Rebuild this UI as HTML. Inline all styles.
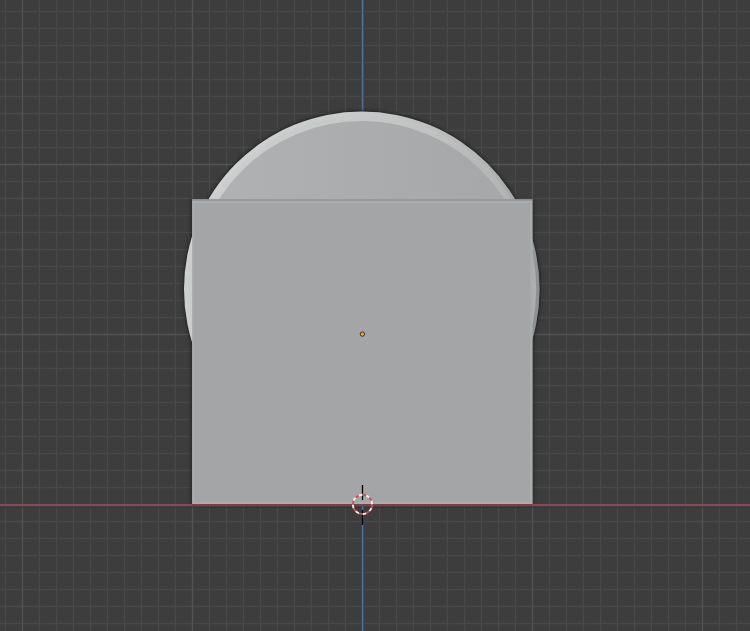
<!DOCTYPE html>
<html><head><meta charset="utf-8"><style>
html,body{margin:0;padding:0;background:#3d3d3d;overflow:hidden;width:750px;height:631px;font-family:"Liberation Sans",sans-serif}
svg{display:block;position:absolute;left:0;top:0}
.f{position:absolute;left:0;top:0;width:750px;height:631px}
#rimA{background:conic-gradient(from 0deg at 361.8px 289.3px,#c8caca 0deg,#bcbebe 25deg,#b1b3b4 45deg,#a2a4a5 65deg,#909293 85deg,#8c8e8f 110deg,#8c8e8f 160deg,#c8caca 220deg,#cdcfcf 270deg,#d0d2d2 315deg,#c8caca 360deg);clip-path:circle(177.8px at 361.8px 289.3px)}
#rimB{background:conic-gradient(from 0deg at 361.8px 289.3px,#c6c8c8 0deg,#c0c2c2 25deg,#b6b8b8 45deg,#b0b2b2 65deg,#adafb0 85deg,#acaeaf 110deg,#acaeaf 160deg,#c8caca 220deg,#cbcdcd 270deg,#cccece 315deg,#c6c8c8 360deg);clip-path:circle(174.4px at 361.8px 289.3px)}
#inner{background:linear-gradient(90deg,#b0b2b3 192.2px,#a4a6a7 531.4px);clip-path:circle(169.6px at 361.8px 290.6px)}
</style></head><body>
<svg width="750" height="631" viewBox="0 0 750 631">
<defs><filter id="bl" x="-20%" y="-20%" width="140%" height="140%"><feGaussianBlur stdDeviation="1.8"/></filter></defs>
<rect width="750" height="631" fill="#3d3d3d"/>
<path d="M5.5 0V631 M39.5 0V631 M56.5 0V631 M73.5 0V631 M90.5 0V631 M107.5 0V631 M124.5 0V631 M141.5 0V631 M158.5 0V631 M175.5 0V631 M209.5 0V631 M226.5 0V631 M243.5 0V631 M260.5 0V631 M277.5 0V631 M294.5 0V631 M311.5 0V631 M328.5 0V631 M345.5 0V631 M379.5 0V631 M396.5 0V631 M413.5 0V631 M430.5 0V631 M447.5 0V631 M464.5 0V631 M481.5 0V631 M498.5 0V631 M515.5 0V631 M549.5 0V631 M566.5 0V631 M583.5 0V631 M600.5 0V631 M617.5 0V631 M634.5 0V631 M651.5 0V631 M668.5 0V631 M685.5 0V631 M719.5 0V631 M736.5 0V631 M0 11.5H750 M0 28.5H750 M0 45.5H750 M0 62.5H750 M0 79.5H750 M0 96.5H750 M0 113.5H750 M0 130.5H750 M0 147.5H750 M0 181.5H750 M0 198.5H750 M0 215.5H750 M0 232.5H750 M0 249.5H750 M0 266.5H750 M0 283.5H750 M0 300.5H750 M0 317.5H750 M0 351.5H750 M0 368.5H750 M0 385.5H750 M0 402.5H750 M0 419.5H750 M0 436.5H750 M0 453.5H750 M0 470.5H750 M0 487.5H750 M0 521.5H750 M0 538.5H750 M0 555.5H750 M0 572.5H750 M0 589.5H750 M0 606.5H750 M0 623.5H750" stroke="#484848" stroke-width="1.4" fill="none"/>
<path d="M22.5 0V631 M192.5 0V631 M532.5 0V631 M702.5 0V631 M0 164.5H750 M0 334.5H750" stroke="#535353" stroke-width="1.4" fill="none"/>
<path d="M362.6 0V631" stroke="#3a4350" stroke-width="3.5" fill="none"/>
<path d="M362.6 0V631" stroke="#54729c" stroke-width="1.3" fill="none"/>
<g filter="url(#bl)" fill="#222" opacity="0.7">
<circle cx="361.8" cy="289.3" r="179.4"/>
<rect x="190.29999999999998" y="199.3" width="344.0" height="306.2"/>
</g>
<circle cx="361.8" cy="289.3" r="178.5" fill="#2c2c2c"/>
</svg>
<div class="f" id="rimA"></div>
<div class="f" id="rimB"></div>
<div class="f" id="inner"></div>
<svg width="750" height="631" viewBox="0 0 750 631">
<rect x="192.1" y="199.3" width="340.4" height="304.7" fill="#a3a5a6"/>
<rect x="193.2" y="201.9" width="338.2" height="301.0" fill="none" stroke="#b1b3b4" stroke-opacity="0.55" stroke-width="2.2"/>
<rect x="192.1" y="199.3" width="340.4" height="1.6" fill="#939596"/>
<path d="M0 505.1H750" stroke="#87485a" stroke-width="2.4" fill="none"/>
<path d="M192.1 505.1H532.5" stroke="#7c4049" stroke-width="2.4" fill="none"/>
<path d="M0 507.2H750" stroke="#363636" stroke-opacity="0.6" stroke-width="1.5" fill="none"/>
<path d="M362.6 506.3V631" stroke="#3a4350" stroke-width="3.5" fill="none"/>
<path d="M362.6 506.3V631" stroke="#54729c" stroke-width="1.3" fill="none"/>
<circle cx="362.4" cy="334.1" r="2.2" fill="#f0a035" stroke="#3a2a10" stroke-width="0.9"/>
<path d="M362.5 485V500M362.5 510V525" stroke="#000" stroke-width="1.3"/>
<path d="M362.50 494.80A9.6 9.6 0 0 1 366.17 495.53" stroke="#c4525a" stroke-width="1.9" fill="none"/>
<path d="M366.17 495.53A9.6 9.6 0 0 1 369.29 497.61" stroke="#eeeeee" stroke-width="1.9" fill="none"/>
<path d="M369.29 497.61A9.6 9.6 0 0 1 371.37 500.73" stroke="#c4525a" stroke-width="1.9" fill="none"/>
<path d="M371.37 500.73A9.6 9.6 0 0 1 372.10 504.40" stroke="#eeeeee" stroke-width="1.9" fill="none"/>
<path d="M372.10 504.40A9.6 9.6 0 0 1 371.37 508.07" stroke="#c4525a" stroke-width="1.9" fill="none"/>
<path d="M371.37 508.07A9.6 9.6 0 0 1 369.29 511.19" stroke="#eeeeee" stroke-width="1.9" fill="none"/>
<path d="M369.29 511.19A9.6 9.6 0 0 1 366.17 513.27" stroke="#c4525a" stroke-width="1.9" fill="none"/>
<path d="M366.17 513.27A9.6 9.6 0 0 1 362.50 514.00" stroke="#eeeeee" stroke-width="1.9" fill="none"/>
<path d="M362.50 514.00A9.6 9.6 0 0 1 358.83 513.27" stroke="#c4525a" stroke-width="1.9" fill="none"/>
<path d="M358.83 513.27A9.6 9.6 0 0 1 355.71 511.19" stroke="#eeeeee" stroke-width="1.9" fill="none"/>
<path d="M355.71 511.19A9.6 9.6 0 0 1 353.63 508.07" stroke="#c4525a" stroke-width="1.9" fill="none"/>
<path d="M353.63 508.07A9.6 9.6 0 0 1 352.90 504.40" stroke="#eeeeee" stroke-width="1.9" fill="none"/>
<path d="M352.90 504.40A9.6 9.6 0 0 1 353.63 500.73" stroke="#c4525a" stroke-width="1.9" fill="none"/>
<path d="M353.63 500.73A9.6 9.6 0 0 1 355.71 497.61" stroke="#eeeeee" stroke-width="1.9" fill="none"/>
<path d="M355.71 497.61A9.6 9.6 0 0 1 358.83 495.53" stroke="#c4525a" stroke-width="1.9" fill="none"/>
<path d="M358.83 495.53A9.6 9.6 0 0 1 362.50 494.80" stroke="#eeeeee" stroke-width="1.9" fill="none"/>
</svg>
</body></html>
